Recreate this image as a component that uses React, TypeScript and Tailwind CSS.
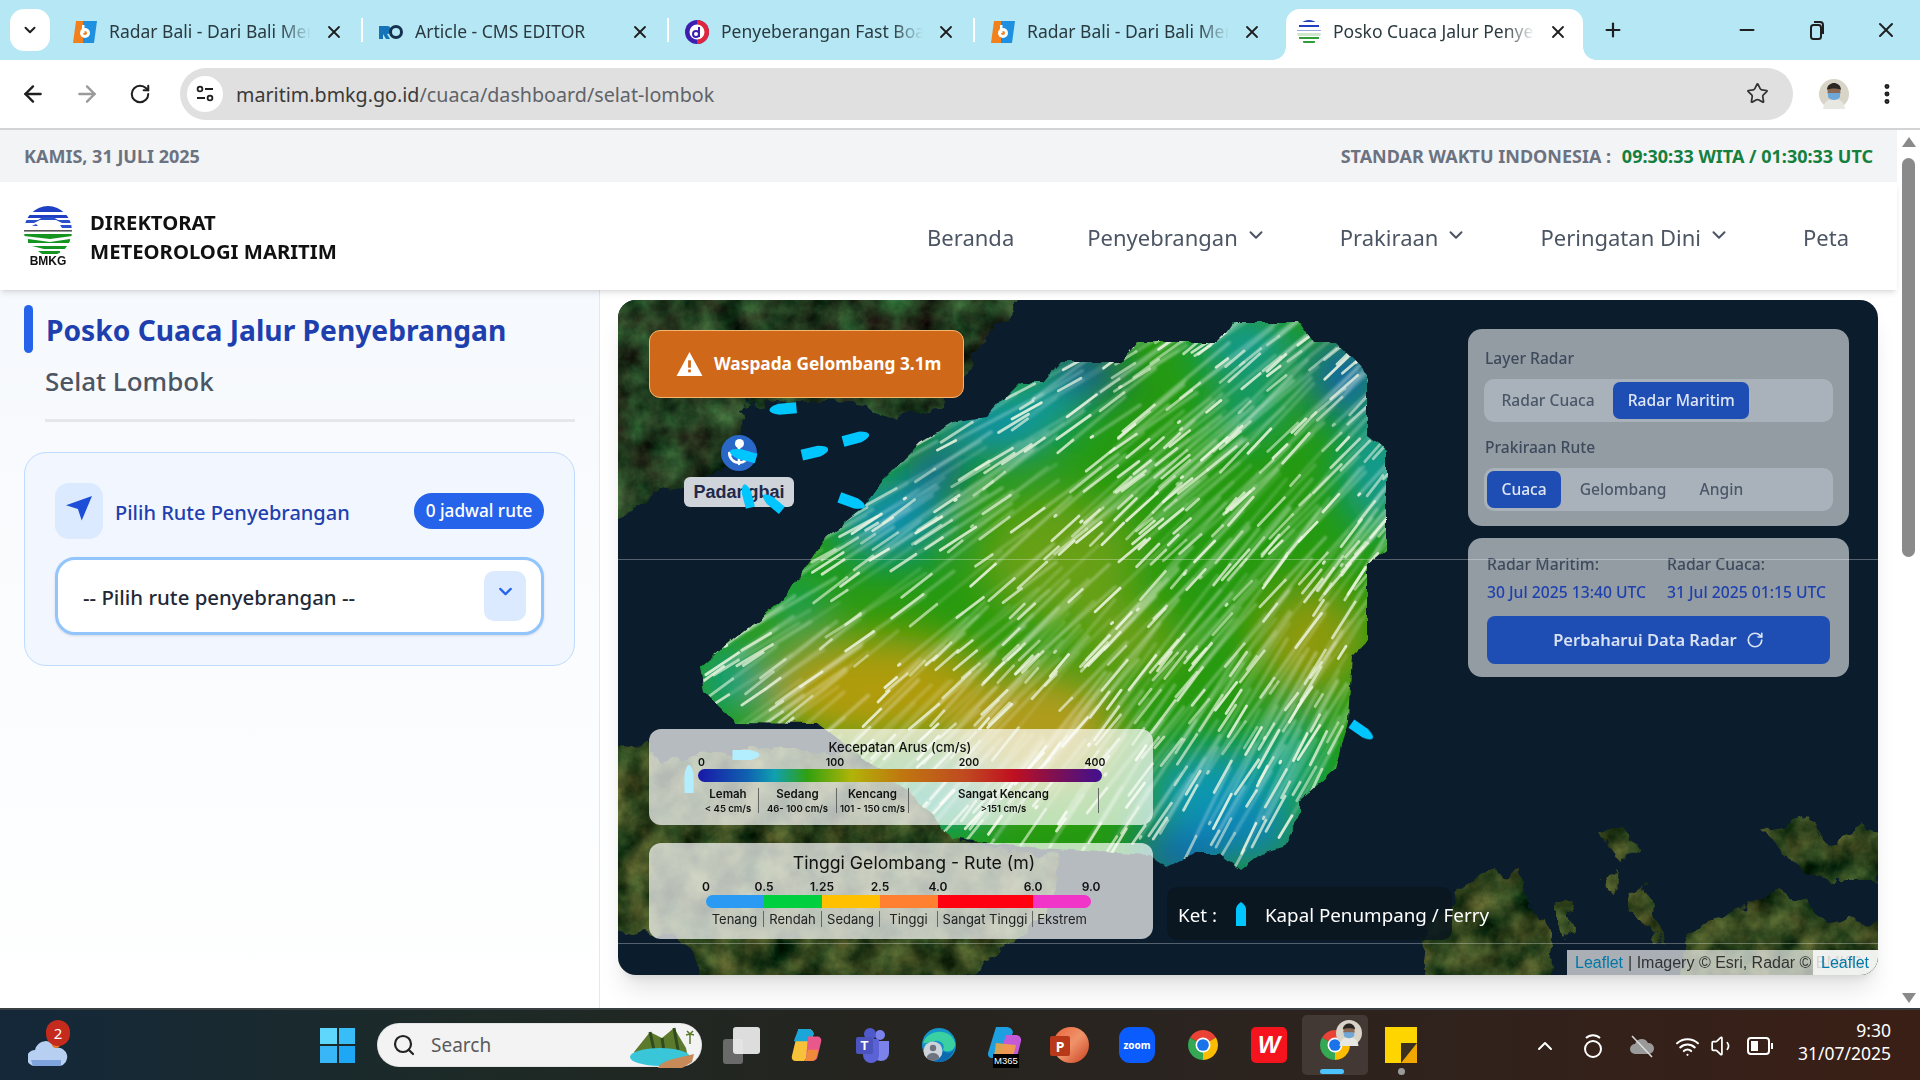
import React from "react";
import { ChevronDown, X, Plus, Minus, ArrowLeft, ArrowRight, RotateCw, Star, EllipsisVertical, Anchor, Search, ChevronUp, Wifi, Volume1 } from "lucide-react";

function mulberry(a: number) {
  return () => {
    a |= 0; a = (a + 0x6d2b79f5) | 0;
    let t = Math.imul(a ^ (a >>> 15), 1 | a);
    t = (t + Math.imul(t ^ (t >>> 7), 61 | t)) ^ t;
    return ((t ^ (t >>> 14)) >>> 0) / 4294967296;
  };
}

const radarPts = "1233,323 1300,323 1313,342 1337,342 1367,373 1367,435 1386,450 1386,550 1367,565 1367,640 1352,655 1348,720 1335,770 1300,800 1300,813 1283,847 1262,853 1240,870 1218,853 1195,853 1166,867 1150,855 1100,852 1040,848 950,837 932,813 880,770 817,723 735,722 704,692 700,667 735,637 784,600 827,537 860,510 880,483 920,443 953,423 987,417 1000,402 1020,382 1043,382 1060,362 1122,362 1137,342 1217,342 1227,332";

const streaks = (() => {
  const r = mulberry(77);
  const out: { x1: number; y1: number; x2: number; y2: number; x3: number; y3: number; o: number; t: number }[] = [];
  for (let i = 0; i < 680; i++) {
    const x = 690 + r() * 700;
    const y = 325 + r() * 550;
    const t = (x - 700) / 690;
    const ang = ((-18 - 25 * t - 24 * (y - 350) / 500 + (r() - 0.5) * 8) * Math.PI) / 180;
    const len = r() < 0.06 ? 2 : 14 + r() * 30;
    const tail = 35 + r() * 70;
    const x2 = x + Math.cos(ang) * len;
    const y2 = y + Math.sin(ang) * len;
    out.push({ x1: x, y1: y, x2, y2, x3: x2 + Math.cos(ang) * tail, y3: y2 + Math.sin(ang) * tail, o: 0.45 + r() * 0.45, t: 0.1 + r() * 0.2 });
  }
  return out;
})();

const blobs: [number, number, number, number, string][] = [
  [1000, 425, 60, 32, "#0d8fb0"], [890, 520, 55, 40, "#0d8fb0"], [935, 470, 26, 26, "#1059b5"], [1085, 372, 38, 22, "#1240b0"], [1040, 405, 45, 25, "#0f9ba0"],
  [1245, 345, 50, 28, "#109aa5"], [1345, 375, 35, 40, "#1062b5"], [1375, 470, 30, 60, "#109aa5"], [1250, 410, 40, 28, "#139a70"],
  [735, 680, 40, 30, "#11a090"], [800, 610, 25, 35, "#12a060"],
  [880, 690, 115, 55, "#b09c10"], [1060, 560, 80, 65, "#68a012"], [1035, 730, 85, 60, "#b09c1a"], [1310, 640, 55, 55, "#8e9a10"], [1130, 640, 50, 35, "#70a014"],
  [1215, 790, 70, 45, "#0f98b0"], [1180, 855, 50, 25, "#1060c0"], [1255, 835, 45, 30, "#0f80b8"], [1290, 760, 30, 50, "#10a080"], [940, 800, 60, 25, "#10a0a0"],
];

function Boat({ x, y, a, w = 27, h = 11, c = "#00c6ff" }: { x: number; y: number; a: number; w?: number; h?: number; c?: string }) {
  const hw = w / 2, hh = h / 2;
  return <path transform={`translate(${x} ${y}) rotate(${a})`} d={`M${-hw} ${-hh} L${hw * 0.3} ${-hh} Q${hw} ${-hh * 0.6} ${hw} 0 Q${hw} ${hh * 0.6} ${hw * 0.3} ${hh} L${-hw} ${hh} Z`} fill={c} />;
}

function LandFilter({ id, seed, m }: { id: string; seed: number; m: string }) {
  return (
    <filter id={id} x="-5%" y="-5%" width="110%" height="110%" colorInterpolationFilters="sRGB">
      <feTurbulence type="fractalNoise" baseFrequency="0.05" numOctaves="3" seed={seed + 3} result="w" />
      <feDisplacementMap in="SourceAlpha" in2="w" scale="22" xChannelSelector="R" yChannelSelector="G" result="shape" />
      <feTurbulence type="fractalNoise" baseFrequency="0.035" numOctaves="5" seed={seed} />
      <feColorMatrix type="matrix" values={m} />
      <feComposite in2="shape" operator="in" />
    </filter>
  );
}

function MapDrawing() {
  const dark = "0.3 0.18 0 0 -0.1  0.55 0 0 0 -0.04  0.3 0.05 0 0 -0.05  0 0 0 0 1";
  const warm = "0.5 0.25 0 0 -0.18  0.5 0.1 0 0 -0.03  0.28 0.05 0 0 -0.05  0 0 0 0 1";
  return (
    <svg viewBox="618 300 1260 675" className="absolute inset-0 w-full h-full" preserveAspectRatio="none">
      <defs>
        <LandFilter id="land" seed={4} m={dark} />
        <LandFilter id="landb" seed={9} m={warm} />
        <filter id="bl" x="-60%" y="-60%" width="220%" height="220%"><feGaussianBlur stdDeviation="22" /></filter>
        <filter id="soft"><feGaussianBlur stdDeviation="0.5" /></filter>
        <filter id="tailb"><feGaussianBlur stdDeviation="1.2" /></filter>
        <filter id="wob" x="-3%" y="-3%" width="106%" height="106%">
          <feTurbulence type="fractalNoise" baseFrequency="0.06" numOctaves="2" seed="3" />
          <feDisplacementMap in="SourceGraphic" scale="8" xChannelSelector="R" yChannelSelector="G" />
        </filter>
        <mask id="radarMask" maskUnits="userSpaceOnUse" x="618" y="300" width="1260" height="675">
          <polygon points={radarPts} fill="#fff" filter="url(#wob)" />
        </mask>
      </defs>
      <rect x="618" y="300" width="1260" height="675" fill="#0b1c2c" />
      <polygon filter="url(#land)" points="600,280 1030,280 970,367 937,410 897,417 853,403 770,400 740,407 743,433 737,467 697,480 653,497 600,530" />
      <polygon filter="url(#landb)" points="600,745 650,748 660,762 740,750 880,750 925,800 960,840 1010,850 1060,860 1040,920 1000,950 960,990 700,990 690,945 640,930 600,925" />
      <polygon filter="url(#landb)" points="1420,940 1457,893 1480,870 1503,877 1521,870 1526,897 1553,943 1549,990 1430,990" />
      <polygon filter="url(#landb)" points="1687,943 1719,917 1783,890 1834,923 1890,917 1890,990 1677,990" />
      <polygon filter="url(#landb)" points="1555,905 1568,900 1575,925 1565,938 1555,925" />
      <polygon filter="url(#landb)" points="1600,880 1612,870 1620,885 1608,893" />
      <polygon filter="url(#landb)" points="1630,895 1645,885 1658,935 1670,945 1650,935 1638,920" />
      <polygon filter="url(#landb)" points="1760,830 1800,815 1830,845 1860,825 1890,835 1890,880 1830,880 1790,860" />
      <polygon filter="url(#landb)" points="1600,835 1625,825 1640,850 1618,862" />
      <g mask="url(#radarMask)">
        <rect x="680" y="310" width="720" height="570" fill="#259a10" />
        <g filter="url(#bl)">
          {blobs.map((b, i) => <ellipse key={i} cx={b[0]} cy={b[1]} rx={b[2]} ry={b[3]} fill={b[4]} />)}
        </g>
        <g stroke="#fff" strokeLinecap="round" fill="none">
          <g filter="url(#tailb)">
            {streaks.map((s, i) => <line key={i} x1={s.x2} y1={s.y2} x2={s.x3} y2={s.y3} strokeWidth={3.5} opacity={s.t} />)}
          </g>
          <g filter="url(#soft)">
            {streaks.map((s, i) => <line key={i} x1={s.x1} y1={s.y1} x2={s.x2} y2={s.y2} strokeWidth={2.8} opacity={s.o} stroke="#eef6e2" />)}
          </g>
        </g>
      </g>
      <Boat x={783} y={409} a={175} />
      <Boat x={815} y={452} a={-13} />
      <Boat x={856} y={438} a={-15} />
      <Boat x={852} y={502} a={20} />
      <Boat x={1362} y={731} a={35} w={26} h={10} />
      <Boat x={746} y={755} a={0} w={27} h={10} />
      <Boat x={689} y={779} a={-90} w={28} h={9} />
    </svg>
  );
}

function Favicon({ kind }: { kind: string }) {
  if (kind === "b") return (
    <svg viewBox="0 0 24 24" className="w-6 h-6"><path d="M3 1h7v22H0z" fill="#f2811d" /><path d="M10 1h14l-3 22H10z" fill="#1f8fe0" /><circle cx="12" cy="13" r="5" fill="#fff" /><circle cx="12" cy="13" r="2" fill="#f2811d" /><rect x="9" y="5" width="2.5" height="8" fill="#fff" /></svg>
  );
  if (kind === "ro") return (
    <svg viewBox="0 0 24 24" className="w-6 h-6"><rect x="0" y="6" width="4" height="13" fill="#1673b8" /><path d="M4 6h4a4 4 0 0 1 0 8l3 5H7l-3-5z" fill="#1673b8" /><circle cx="17" cy="12" r="5.5" fill="none" stroke="#15324f" strokeWidth="3" /></svg>
  );
  if (kind === "d") return (
    <svg viewBox="0 0 24 24" className="w-6 h-6"><circle cx="12" cy="12" r="12" fill="#3c1fb0" /><path d="M12 0a12 12 0 0 1 0 24z" fill="#e0263c" /><circle cx="12" cy="12" r="7.5" fill="#fff" /><circle cx="11" cy="14" r="3" fill="none" stroke="#3c1fb0" strokeWidth="2" /><rect x="13" y="7" width="2" height="10" fill="#3c1fb0" /></svg>
  );
  return (
    <svg viewBox="0 0 24 24" className="w-6 h-6"><defs><clipPath id="fv"><circle cx="12" cy="12" r="12" /></clipPath></defs><g clipPath="url(#fv)"><rect width="24" height="24" fill="#fff" /><path d="M5 0h14v2H5zM2 5h20v2H2z" fill="#2040c0" /><path d="M0 10h24v1H0z" fill="#9ad" /><path d="M0 13h24v3H0z" fill="#cfe7cf" /><path d="M2 17h20v2H2zM6 21h12v2H6z" fill="#2f9e3a" /></g></svg>
  );
}

const tabs = [
  { k: "b", t: "Radar Bali - Dari Bali Menuju Dunia" },
  { k: "ro", t: "Article - CMS EDITOR" },
  { k: "d", t: "Penyeberangan Fast Boat Padangbai" },
  { k: "b", t: "Radar Bali - Dari Bali Menuju Dunia" },
  { k: "m", t: "Posko Cuaca Jalur Penyebrangan", active: true },
];

function ChromeIcon({ className }: { className: string }) {
  return (
    <svg viewBox="0 0 48 48" className={className}>
      <path d="M24 24L6.68 14A20 20 0 0 1 41.32 14Z" fill="#ea4335" />
      <path d="M24 24L41.32 14A20 20 0 0 1 24 44Z" fill="#fbbc04" />
      <path d="M24 24L24 44A20 20 0 0 1 6.68 14Z" fill="#34a853" />
      <circle cx="24" cy="24" r="10" fill="#fff" />
      <circle cx="24" cy="24" r="7.8" fill="#1a73e8" />
    </svg>
  );
}

function Avatar({ className }: { className: string }) {
  return (
    <svg viewBox="0 0 30 30" className={className}>
      <circle cx="15" cy="15" r="15" fill="#d9d4c8" />
      <path d="M4 30c1-8 6-10 11-10s10 2 11 10z" fill="#e8e8e2" />
      <circle cx="15" cy="13" r="6.5" fill="#8a6a55" />
      <path d="M8 11c0-5 4-7 7-7s7 2 7 7c-3-2-11-2-14 0z" fill="#2b2624" />
      <path d="M9 14h12v4c-2 4-10 4-12 0z" fill="#6fa8d8" />
    </svg>
  );
}

function TabStrip() {
  return (
    <div className="h-[60px] bg-[#b5e7f4] flex items-end relative">
      <div className="absolute left-[10px] top-[9px] w-[40px] h-[42px] bg-white rounded-[14px] flex items-center justify-center">
        <ChevronDown className="w-[18px] h-[18px] text-[#1f1f1f]" strokeWidth={2.6} />
      </div>
      <div className="ml-[57px] flex items-end">
        {tabs.map((t, i) => (
          <div key={i} className={`relative w-[306px] h-[51px] flex items-center pl-[16px] ${t.active ? "z-10" : ""}`}>
            {t.active && (
              <>
                <div className="absolute left-[5px] right-[4px] inset-y-0 bg-white rounded-t-[14px]" />
                <div className="absolute left-[-8px] bottom-0 w-[13px] h-[13px] bg-[radial-gradient(circle_at_0_0,transparent_12.5px,white_13px)]" />
                <div className="absolute right-[-9px] bottom-0 w-[13px] h-[13px] bg-[radial-gradient(circle_at_100%_0,transparent_12.5px,white_13px)]" />
              </>
            )}
            <div className="relative flex items-center pb-[6px]">
              <Favicon kind={t.k} />
              <div className="ml-[12px] w-[202px] overflow-hidden whitespace-nowrap text-[17.5px] text-[#2a3a40] [mask-image:linear-gradient(to_right,black_85%,transparent)]">{t.t}</div>
              <X className="ml-[13px] w-[20px] h-[20px] text-[#1f1f1f]" strokeWidth={2.2} />
            </div>
            {!t.active && i < 3 && <div className="absolute right-0 top-[9px] w-[2px] h-[24px] bg-white" />}
          </div>
        ))}
      </div>
      <Plus className="absolute left-[1602px] top-[19px] w-[22px] h-[22px] text-[#1f1f1f]" strokeWidth={2.4} />
      <div className="absolute right-[22px] top-[18px] flex items-center gap-[47px]">
        <Minus className="w-[22px] h-[22px] text-[#1f1f1f]" strokeWidth={2.4} />
        <svg viewBox="0 0 22 22" className="w-[22px] h-[22px]" fill="none" stroke="#1f1f1f" strokeWidth="2"><rect x="6" y="6" width="10" height="14" rx="2.5" /><path d="M9 3h6a3 3 0 0 1 3 3v9" /></svg>
        <X className="w-[24px] h-[24px] text-[#1f1f1f]" strokeWidth={2} />
      </div>
    </div>
  );
}

function Toolbar() {
  return (
    <div className="h-[70px] bg-white rounded-t-[12px] border-b-2 border-[#d4d4d4] flex items-center pl-[20px] pr-[20px] relative">
      <ArrowLeft className="w-[26px] h-[26px] text-[#1f1f1f]" strokeWidth={2.2} />
      <ArrowRight className="ml-[28px] w-[26px] h-[26px] text-[#9a9a9a]" strokeWidth={2.2} />
      <RotateCw className="ml-[29px] w-[22px] h-[22px] text-[#1f1f1f]" strokeWidth={2.2} />
      <div className="ml-[29px] flex-1 h-[52px] bg-[#e0e0e0] rounded-full flex items-center pl-[7px] pr-[24px] mb-[1px]">
        <div className="w-[36px] h-[36px] rounded-full bg-white flex items-center justify-center">
          <svg viewBox="0 0 20 20" className="w-[20px] h-[20px]" fill="none" stroke="#1f1f1f" strokeWidth="1.8"><circle cx="5" cy="5" r="2.4" /><path d="M10 5h8M2 14h8" /><circle cx="15" cy="14" r="2.4" /></svg>
        </div>
        <div className="ml-[13px] pt-[2px] text-[19.7px] text-[#3a3a3a] whitespace-nowrap">maritim.bmkg.go.id<span className="text-[#5f6368]">/cuaca/dashboard/selat-lombok</span></div>
        <Star className="ml-auto w-[23px] h-[23px] text-[#333]" strokeWidth={1.8} />
      </div>
      <Avatar className="ml-[26px] w-[30px] h-[30px]" />
      <EllipsisVertical className="ml-[25px] w-[26px] h-[26px] text-[#1f1f1f]" strokeWidth={2.6} />
    </div>
  );
}

function Logo() {
  return (
    <div className="w-[48px] flex flex-col items-center">
      <svg viewBox="0 0 48 50" className="w-[48px] h-[50px]">
        <defs><clipPath id="lg"><ellipse cx="24" cy="25" rx="24" ry="25" /></clipPath></defs>
        <g clipPath="url(#lg)">
          <rect x="0" y="0" width="48" height="6" fill="#1f3fc4" />
          <path d="M0 9h48v3H0z" fill="#1f3fc4" />
          <path d="M0 14h14l5-3h10l5 3h14v3H38l-6-3H16l-6 3H0z" fill="#2a50cc" />
          <path d="M0 20h8l4-2 2 2H0zM36 19h12v3H38z" fill="#2a50cc" />
          <rect x="0" y="24" width="48" height="1.6" fill="#555" />
          <path d="M0 28h48v2L26 33 0 30z" fill="#14951f" />
          <path d="M4 33l22 3 20-3v4H4z" fill="#14951f" />
          <path d="M8 40h36v3H20zM14 45h22v3H18z" fill="#14951f" />
        </g>
      </svg>
      <div className="font-['Liberation_Sans',sans-serif] font-bold text-[12px] leading-[12px] text-[#111] -mt-[1px]">BMKG</div>
    </div>
  );
}

function Header() {
  const items: [string, boolean][] = [["Beranda", false], ["Penyebrangan", true], ["Prakiraan", true], ["Peringatan Dini", true], ["Peta", false]];
  return (
    <>
      <div className="h-[52px] bg-[#f3f4f6] flex items-center justify-between pl-[24px] pr-[24px] text-[18px] font-bold text-[#6b7280]">
        <span>KAMIS, 31 JULI 2025</span>
        <span>STANDAR WAKTU INDONESIA : <span className="ml-[6px] text-[#15803d]">09:30:33 WITA / 01:30:33 UTC</span></span>
      </div>
      <div className="relative z-10 h-[108px] bg-white shadow-md flex items-center justify-between pl-[24px] pr-[48px]">
        <div className="flex items-center gap-[18px]">
          <Logo />
          <div className="pt-[2px] text-[20.3px] leading-[29px] font-bold text-[#111]">DIREKTORAT<br />METEOROLOGI MARITIM</div>
        </div>
        <nav className="flex items-center gap-[73px] text-[22px] pt-[2px] text-[#4b5563]">
          {items.map(([t, c]) => (
            <div key={t} className="flex items-center gap-[7px]">
              {t}
              {c && <ChevronDown className="w-[22px] h-[22px] -mt-[5px]" strokeWidth={2.2} />}
            </div>
          ))}
        </nav>
      </div>
    </>
  );
}

function Sidebar() {
  return (
    <aside className="w-[600px] border-r border-[#e5e7eb] bg-linear-to-b from-[#f6f9fd] to-white pl-[24px] pr-[24px] pt-[15px]">
      <div className="flex items-center gap-[13px] h-[48px]">
        <div className="w-[9px] h-[48px] rounded-full bg-[#2563eb]" />
        <h1 className="pt-[2px] text-[28.2px] font-bold text-[#1e40af] whitespace-nowrap">Posko Cuaca Jalur Penyebrangan</h1>
      </div>
      <div className="pl-[21px]">
        <div className="mt-[8px] text-[26px] leading-[40px] font-medium text-[#4b5563]">Selat Lombok</div>
        <div className="mt-[18px] h-[3px] bg-[#e5e7eb]" />
      </div>
      <section className="mt-[30px] h-[214px] rounded-[22px] border border-[#bfdbfe] bg-[#f2f7ff] pl-[30px] pr-[30px] pt-[30px]">
        <div className="flex items-center h-[56px]">
          <div className="w-[48px] h-[56px] rounded-[14px] bg-[#dbeafe] flex items-start justify-center pt-[12px]">
            <svg viewBox="0 0 24 24" className="w-[26px] h-[26px]"><path d="M24 1L14.500 23.500 11 13 0 9.500z" fill="#1d4ed8" /></svg>
          </div>
          <div className="ml-[12px] text-[20px] pt-[3px] font-medium text-[#1e40af] whitespace-nowrap">Pilih Rute Penyebrangan</div>
          <div className="ml-auto h-[36px] w-[130px] rounded-full bg-[#2563eb] text-white text-[17.2px] font-medium flex items-center justify-center">0 jadwal rute</div>
        </div>
        <div className="mt-[18px] h-[78px] rounded-[20px] border-[3px] border-[#93c5fd] bg-white shadow-sm flex items-center pl-[25px] pr-[15px]">
          <span className="pt-[3px] text-[20.4px] font-medium text-[#1f2937] whitespace-nowrap">-- Pilih rute penyebrangan --</span>
          <div className="ml-auto w-[42px] h-[50px] rounded-[10px] bg-[#dbeafe] flex items-start justify-center pt-[10px]">
            <ChevronDown className="w-[21px] h-[21px] text-[#2563eb]" strokeWidth={2.5} />
          </div>
        </div>
      </section>
    </aside>
  );
}

function Legend1() {
  const cats = [
    { n: "Lemah", s: "< 45 cm/s", w: "w-[61px]" },
    { n: "Sedang", s: "46- 100 cm/s", w: "w-[78px]" },
    { n: "Kencang", s: "101 - 150 cm/s", w: "w-[72px]" },
    { n: "Sangat Kencang", s: ">151 cm/s", w: "w-[190px]" },
  ];
  return (
    <div className="w-[504px] h-[96px] rounded-[12px] bg-white/70 pl-[49px] pr-[51px] pt-[10px] text-[#111] font-['Inter',sans-serif]">
      <div className="text-center text-[13px] leading-[16px] font-medium">Kecepatan Arus (cm/s)</div>
      <div className="flex h-[13px] text-[10.5px] leading-[13px] font-semibold mt-[1px]">
        <div className="w-[137px] shrink-0"><span>0</span></div>
        <div className="w-[134px] shrink-0"><span className="inline-block -translate-x-1/2">100</span></div>
        <div className="w-[126px] shrink-0"><span className="inline-block -translate-x-1/2">200</span></div>
        <div className="shrink-0"><span className="inline-block -translate-x-1/2">400</span></div>
      </div>
      <div className="h-[13px] rounded-full bg-[linear-gradient(to_right,#1818a8,#1060b0_12%,#10a0b0_19%,#30a010_27%,#b0b408_38%,#c07810_50%,#c04a20_66%,#c01020_78%,#801050_88%,#401090)]" />
      <div className="flex mt-[6px] h-[25px]">
        {cats.map((c) => (
          <div key={c.n} className={`${c.w} border-r border-[#666] text-center`}>
            <div className="text-[11.5px] leading-[13px] font-semibold">{c.n}</div>
            <div className="text-[9.5px] leading-[12px] font-semibold mt-[2px] whitespace-nowrap">{c.s}</div>
          </div>
        ))}
      </div>
    </div>
  );
}

function Legend2() {
  const seg = [
    { w: "w-[58px]", c: "bg-[#2b9af3]", n: "0", l: "Tenang" },
    { w: "w-[58px]", c: "bg-[#00d040]", n: "0.5", l: "Rendah" },
    { w: "w-[58px]", c: "bg-[#ffc000]", n: "1.25", l: "Sedang" },
    { w: "w-[58px]", c: "bg-[#ff8030]", n: "2.5", l: "Tinggi" },
    { w: "w-[95px]", c: "bg-[#ff0010]", n: "4.0", l: "Sangat Tinggi" },
    { w: "w-[58px]", c: "bg-[#f035c8]", n: "6.0", l: "Ekstrem" },
  ];
  return (
    <div className="w-[504px] h-[96px] rounded-[12px] bg-white/70 pl-[57px] pt-[8px] text-[#111] font-['Inter',sans-serif]">
      <div className="w-[416px] text-center text-[17.7px] leading-[24px]">Tinggi Gelombang - Rute (m)</div>
      <div className="flex w-[385px] h-[16px] mt-[4px] text-[12px] leading-[16px] font-semibold">
        {seg.map((s, i) => (
          <div key={s.n} className={`${s.w} flex justify-between`}>
            <span className="-translate-x-1/2">{s.n}</span>
            {i === 5 && <span className="translate-x-1/2 -ml-[10px]">9.0</span>}
          </div>
        ))}
      </div>
      <div className="flex w-[385px] h-[13px] rounded-full overflow-hidden">
        {seg.map((s) => <div key={s.n} className={`${s.w} ${s.c}`} />)}
      </div>
      <div className="flex w-[385px] mt-[3px] text-[13px] leading-[16px] text-[#222]">
        {seg.map((s, i) => (
          <div key={s.l} className={`${s.w} text-center whitespace-nowrap ${i < 5 ? "border-r border-[#666]" : ""}`}>{s.l}</div>
        ))}
      </div>
    </div>
  );
}

function ControlTabs({ items, active }: { items: string[]; active: string }) {
  return (
    <div className="h-[43px] rounded-[10px] bg-[#a9b2bb] flex items-center px-[3px]">
      {items.map((t) => (
        <div key={t} className={`h-[37px] px-[14.500px] mr-[4px] rounded-[7px] flex items-center whitespace-nowrap text-[15.6px] font-medium ${t === active ? "bg-[#1e4eb3] text-[#dfe7f5]" : "text-[#4b5768]"}`}>{t}</div>
      ))}
    </div>
  );
}

function MapPanel() {
  return (
    <main className="flex-1 pt-[10px] pl-[18px] pr-[19px]">
      <div className="relative h-[675px] rounded-[18px] overflow-hidden shadow-xl">
        <MapDrawing />

        <div className="absolute left-[31px] top-[30px] w-[315px] h-[68px] rounded-[11px] border border-[#f5b56f] bg-[#d0681a] flex items-center pl-[26px] gap-[11px] text-white text-[17.3px] font-bold whitespace-nowrap">
          <svg viewBox="0 0 28 26" className="w-[27px] h-[24px] shrink-0"><path d="M14 0L28 26H0z" fill="#fff" /><rect x="12.500" y="9" width="3" height="8" fill="#d0681a" /><rect x="12.500" y="19" width="3" height="3" fill="#d0681a" /></svg>
          Waspada Gelombang 3.1m
        </div>

        <div className="absolute left-[103px] top-[135px] w-[36px] h-[36px] rounded-full bg-[#2a68c8] flex items-center justify-center shadow">
          <Anchor className="w-[26px] h-[26px] text-white" strokeWidth={2.4} />
          <div className="absolute left-[14px] top-[4px] w-[9px] h-[9px] rounded-full bg-white" />
        </div>
        <svg viewBox="0 0 60 60" className="absolute left-[95px] top-[125px] w-[60px] h-[60px]"><Boat x={30} y={30} a={195} w={27} h={10} /></svg>
        <div className="absolute left-[66px] top-[177px] w-[110px] h-[30px] rounded-[6px] bg-[#cfd3da] flex items-center justify-center font-['Liberation_Sans',sans-serif] font-bold text-[18px] text-[#1e2a4a]">Padangbai</div>
        <svg viewBox="0 0 60 40" className="absolute left-[100px] top-[170px] w-[80px] h-[60px]">
          <Boat x={22} y={17} a={-105} w={18} h={7} />
          <Boat x={41} y={22} a={-140} w={18} h={7} />
        </svg>

        <div className="absolute left-[31px] top-[429px]"><Legend1 /></div>
        <div className="absolute left-[31px] top-[543px]"><Legend2 /></div>

        <div className="absolute left-[549px] top-[587px] w-[285px] h-[53px] rounded-[10px] bg-[#0a1620]/85 flex items-center pl-[11px] pt-[3px] text-white text-[18.8px] whitespace-nowrap">
          Ket :
          <svg viewBox="0 0 10 24" className="ml-[19px] -mt-[3px] w-[10px] h-[24px] shrink-0"><path d="M0 24V8Q0 3 5 0Q10 3 10 8V24z" fill="#00c6ff" /></svg>
          <span className="ml-[19px]">Kapal Penumpang / Ferry</span>
        </div>

        <div className="absolute right-[29px] top-[29px] w-[381px] flex flex-col gap-[12px] text-[#3d4a5c] text-[16px] font-medium">
          <div className="h-[197px] rounded-[14px] bg-[#939ba3] pl-[16px] pr-[16px] pt-[17px]">
            <div className="pl-[1px] h-[24px] leading-[24px] text-[15.6px]">Layer Radar</div>
            <div className="mt-[9px]"><ControlTabs items={["Radar Cuaca", "Radar Maritim"]} active="Radar Maritim" /></div>
            <div className="mt-[13px] pl-[1px] h-[24px] leading-[24px] text-[15.6px]">Prakiraan Rute</div>
            <div className="mt-[9px]"><ControlTabs items={["Cuaca", "Gelombang", "Angin"]} active="Cuaca" /></div>
          </div>
          <div className="h-[139px] rounded-[14px] bg-[#939ba3] px-[19px] pt-[14px]">
            <div className="flex text-[15.7px]">
              <div className="w-[180px]"><div className="leading-[24px]">Radar Maritim:</div><div className="leading-[24px] mt-[4px] text-[#1e40af] whitespace-nowrap">30 Jul 2025 13:40 UTC</div></div>
              <div><div className="leading-[24px]">Radar Cuaca:</div><div className="leading-[24px] mt-[4px] text-[#1e40af] whitespace-nowrap">31 Jul 2025 01:15 UTC</div></div>
            </div>
            <div className="mt-[12px] h-[48px] rounded-[8px] bg-[#1e4eb3] text-[#d9e2f2] text-[16.5px] font-semibold flex items-center justify-center gap-[9px]">
              Perbaharui Data Radar
              <RotateCw className="w-[18px] h-[18px]" strokeWidth={2.2} />
            </div>
          </div>
        </div>

        <div className="absolute inset-x-0 top-[259px] h-px bg-white/30" />
        <div className="absolute inset-x-0 top-[643px] h-px bg-white/30" />

        <div className="absolute right-0 bottom-0 h-[25px] w-[311px] bg-white/65 pl-[8px] flex items-center font-['Liberation_Sans',sans-serif] text-[16px] text-[#333] whitespace-nowrap overflow-hidden">
          <span className="text-[#0078a8]">Leaflet</span><span className="ml-[5px]">| Imagery © Esri, Radar © BMKG</span>
        </div>
        <div className="absolute right-0 bottom-0 h-[25px] w-[65px] bg-white/80 pl-[8px] flex items-center font-['Liberation_Sans',sans-serif] text-[16px] text-[#0078a8]">Leaflet</div>
      </div>
    </main>
  );
}

function Scrollbar() {
  return (
    <div className="w-[23px] bg-white flex flex-col items-center relative">
      <div className="mt-[7px] w-0 h-0 border-x-[7px] border-x-transparent border-b-[10px] border-b-[#8a8a8a]" />
      <div className="mt-[11px] w-[13px] h-[399px] rounded-full bg-[#8a8a8a]" />
      <div className="mt-auto mb-[5px] w-0 h-0 border-x-[7px] border-x-transparent border-t-[10px] border-t-[#8a8a8a]" />
    </div>
  );
}

function Slot({ children, className = "" }: { children: React.ReactNode; className?: string }) {
  return <div className={`relative w-[66px] h-[60px] flex items-center justify-center ${className}`}>{children}</div>;
}

function Taskbar() {
  return (
    <div className="h-[72px] border-t-2 border-[#3a3f42] bg-[linear-gradient(to_right,#14283a,#1d2a26_25%,#25241f_45%,#2a2420_60%,#3a1f16)] flex items-center relative text-white">
      <div className="absolute left-[28px] top-[10px]">
        <svg viewBox="0 0 40 50" className="w-[40px] h-[50px]">
          <path d="M7 46a8 8 0 0 1 0-16 11 11 0 0 1 21-2 9 9 0 0 1 4 18z" fill="#b7cff0" />
          <path d="M5 46h28v-6H3z" fill="#7fa3dc" />
          <circle cx="28" cy="24" r="4" fill="#e8792b" />
        </svg>
        <div className="absolute left-[18px] top-0 w-[24px] h-[26px] rounded-full bg-[#c42b1c] text-white text-[15px] flex items-center justify-center">2</div>
      </div>

      <div className="ml-[320px] w-[35px] h-[35px] grid grid-cols-2 gap-[2px]">
        <div className="bg-[#5fd6fb]" /><div className="bg-[#38bdf8]" /><div className="bg-[#38b6f8]" /><div className="bg-[#1ea7f5]" />
      </div>

      <div className="ml-[22px] w-[325px] h-[44px] rounded-full bg-[#f3f3f3] border border-[#d0d0d0]/40 flex items-center pl-[14px] text-[#5a5a5a] text-[19px] relative">
        <Search className="w-[24px] h-[24px] text-[#222]" strokeWidth={2.2} />
        <span className="ml-[15px]">Search</span>
        <svg viewBox="0 0 70 44" className="absolute right-[3px] top-0 w-[70px] h-[44px]">
          <path d="M6 28L22 8 34 14 46 4 58 24 60 34H8z" fill="#5c7a2c" />
          <path d="M22 8l4 18M34 14l2 14M46 4l4 22" stroke="#2f4a1e" strokeWidth="3" />
          <path d="M62 20V10M62 10l-4 1M62 10l4 1M62 10l-3-3M62 10l3-3" stroke="#5c7a2c" strokeWidth="1.5" fill="none" />
          <ellipse cx="32" cy="33" rx="30" ry="9" fill="#38c6d8" />
          <path d="M30 44c4-8 20-10 36-14l-2 8-10 6z" fill="#c98a5a" />
        </svg>
      </div>

      <div className="ml-[6px] flex items-center">
        <Slot>
          <div className="relative w-[37px] h-[37px]">
            <div className="absolute left-0 bottom-0 w-[20px] h-[25px] rounded-[3px] bg-[#6a6a6a]" />
            <div className="absolute right-0 top-0 w-[27px] h-[27px] rounded-[3px] bg-[#f2f2f2]/90" />
          </div>
        </Slot>
        <Slot>
          <svg viewBox="0 0 34 38" className="w-[34px] h-[36px]">
            <path d="M8 2h10a6 6 0 0 1 6 5l-8 26a4 4 0 0 1-4 3H5a4 4 0 0 1-4-5z" fill="#f7c23a" />
            <path d="M8 2h10a6 6 0 0 1 6 5l-3 8H3z" fill="#1aa6d8" />
            <path d="M18 10h10a4 4 0 0 1 4 5l-4 17a6 6 0 0 1-6 4H12a4 4 0 0 0 4-3z" fill="#e8588a" />
            <path d="M18 24h11l-2 8a6 6 0 0 1-6 4h-9a4 4 0 0 0 4-3z" fill="#f08a3a" />
          </svg>
        </Slot>
        <Slot>
          <svg viewBox="0 0 36 36" className="w-[36px] h-[36px]">
            <circle cx="25" cy="8" r="5" fill="#7b83eb" />
            <path d="M18 14h16v12a8 8 0 0 1-16 0z" fill="#7b83eb" />
            <circle cx="15" cy="7" r="6" fill="#5059c9" />
            <path d="M8 12h16v16a8 8 0 0 1-16 0z" fill="#5b62d6" />
            <rect x="1" y="10" width="17" height="17" rx="2" fill="#4b53bc" />
            <text x="9.500" y="23" textAnchor="middle" fontSize="13" fontWeight="700" fill="#fff" fontFamily="Liberation Sans, sans-serif">T</text>
          </svg>
        </Slot>
        <Slot>
          <svg viewBox="0 0 36 36" className="w-[36px] h-[36px]">
            <circle cx="18" cy="18" r="17" fill="#1494c9" />
            <path d="M2 16C6 2 30 0 34 16c1 8-8 10-12 7 3-6-3-10-8-9-6 1-10 3-12 2z" fill="#3ad0a2" />
            <path d="M22 24c5 3 10 2 12-4-2 9-9 15-16 15-4 0-9-3-11-6 6 2 11 1 15-5z" fill="#0c6ab0" />
            <circle cx="12" cy="24" r="9.500" fill="#cfd4da" />
            <circle cx="12" cy="21" r="3.200" fill="#6d7480" />
            <path d="M5.500 31c1-4 4-5 6.500-5s5.500 1 6.500 5a9.500 9.500 0 0 1-13 0z" fill="#6d7480" />
          </svg>
        </Slot>
        <Slot>
          <svg viewBox="0 0 38 40" className="w-[38px] h-[40px]">
            <path d="M10 2h11a7 7 0 0 1 6 5l-9 26H6a4 4 0 0 1-4-5z" fill="#1ea0e0" />
            <path d="M20 10h10a5 5 0 0 1 5 6l-4 16H13z" fill="#c45ad8" />
            <path d="M10 18l20 2-3 12H8z" fill="#f7a33a" opacity=".85" />
          </svg>
          <div className="absolute left-[21px] bottom-[7px] bg-black text-white text-[9.5px] leading-[14px] px-[1px] font-['Liberation_Sans',sans-serif]">M365</div>
        </Slot>
        <Slot>
          <div className="relative w-[36px] h-[36px]">
            <div className="absolute inset-0 rounded-full bg-[linear-gradient(135deg,#e8633a,#f0936a_50%,#c8401e)]" />
            <div className="absolute left-[-3px] top-[9px] w-[20px] h-[20px] rounded-[2px] bg-[#b7391a] text-white text-[14px] font-bold flex items-center justify-center">P</div>
          </div>
        </Slot>
        <Slot>
          <div className="w-[36px] h-[36px] rounded-[11px] bg-[#0b5cff] text-white text-[10px] font-bold flex items-center justify-center">zoom</div>
        </Slot>
        <Slot><ChromeIcon className="w-[36px] h-[36px]" /></Slot>
        <Slot>
          <div className="w-[36px] h-[36px] rounded-[5px] bg-[#f5141e] text-white text-[24px] font-bold italic flex items-center justify-center font-['Liberation_Sans',sans-serif]">W</div>
        </Slot>
        <Slot className="bg-white/10 rounded-[5px] h-[60px]">
          <ChromeIcon className="w-[36px] h-[36px]" />
          <Avatar className="absolute right-[6px] top-[5px] w-[26px] h-[26px]" />
          <div className="absolute bottom-[1px] left-[18px] w-[24px] h-[5px] rounded-full bg-[#4cc2ff]" />
        </Slot>
        <Slot>
          <div className="relative w-[32px] h-[36px] bg-[#ffd500]">
            <div className="absolute right-0 bottom-0 w-0 h-0 border-l-[16px] border-l-[#3a3020] border-b-[20px] border-b-[#f0a800]" />
          </div>
          <div className="absolute bottom-0 left-[30px] w-[7px] h-[7px] rounded-full bg-[#9a9a9a]" />
        </Slot>
      </div>

      <div className="absolute left-[1533px] top-[14px] h-[44px] flex items-center">
        <ChevronUp className="w-[24px] h-[24px]" strokeWidth={2} />
        <svg viewBox="0 0 20 28" className="ml-[26px] w-[20px] h-[28px]" fill="none" stroke="#fff" strokeWidth="2"><circle cx="10" cy="17" r="8" /><path d="M3 6a10 10 0 0 1 14 0" /></svg>
        <svg viewBox="0 0 26 24" className="ml-[26px] w-[26px] h-[24px]"><path d="M6 20a5 5 0 0 1 0-10 7 7 0 0 1 13-1 5.500 5.500 0 0 1 1 11z" fill="#9a9a9a" /><path d="M3 2l20 21" stroke="#ddd" strokeWidth="1.5" /></svg>
        <Wifi className="ml-[20px] w-[25px] h-[25px]" strokeWidth={2} />
        <Volume1 className="ml-[10px] w-[26px] h-[26px]" strokeWidth={1.6} />
        <svg viewBox="0 0 26 20" className="ml-[11px] w-[26px] h-[20px]" fill="none" stroke="#fff" strokeWidth="2"><rect x="1" y="2" width="21" height="16" rx="3" /><rect x="4" y="5" width="7" height="10" fill="#fff" stroke="none" /><path d="M25 7v6" /></svg>
      </div>
      <div className="absolute right-[29px] top-[9px] text-right text-[17.5px] leading-[23px]">
        <div>9:30</div>
        <div>31/07/2025</div>
      </div>
    </div>
  );
}

export default function App() {
  return (
    <div className="w-[1920px] h-[1080px] overflow-hidden flex flex-col bg-white font-['Noto_Sans',sans-serif]">
      <TabStrip />
      <Toolbar />
      <div className="flex-1 flex min-h-0">
        <div className="flex-1 flex flex-col min-w-0">
          <Header />
          <div className="flex-1 flex min-h-0">
            <Sidebar />
            <MapPanel />
          </div>
        </div>
        <Scrollbar />
      </div>
      <Taskbar />
    </div>
  );
}
